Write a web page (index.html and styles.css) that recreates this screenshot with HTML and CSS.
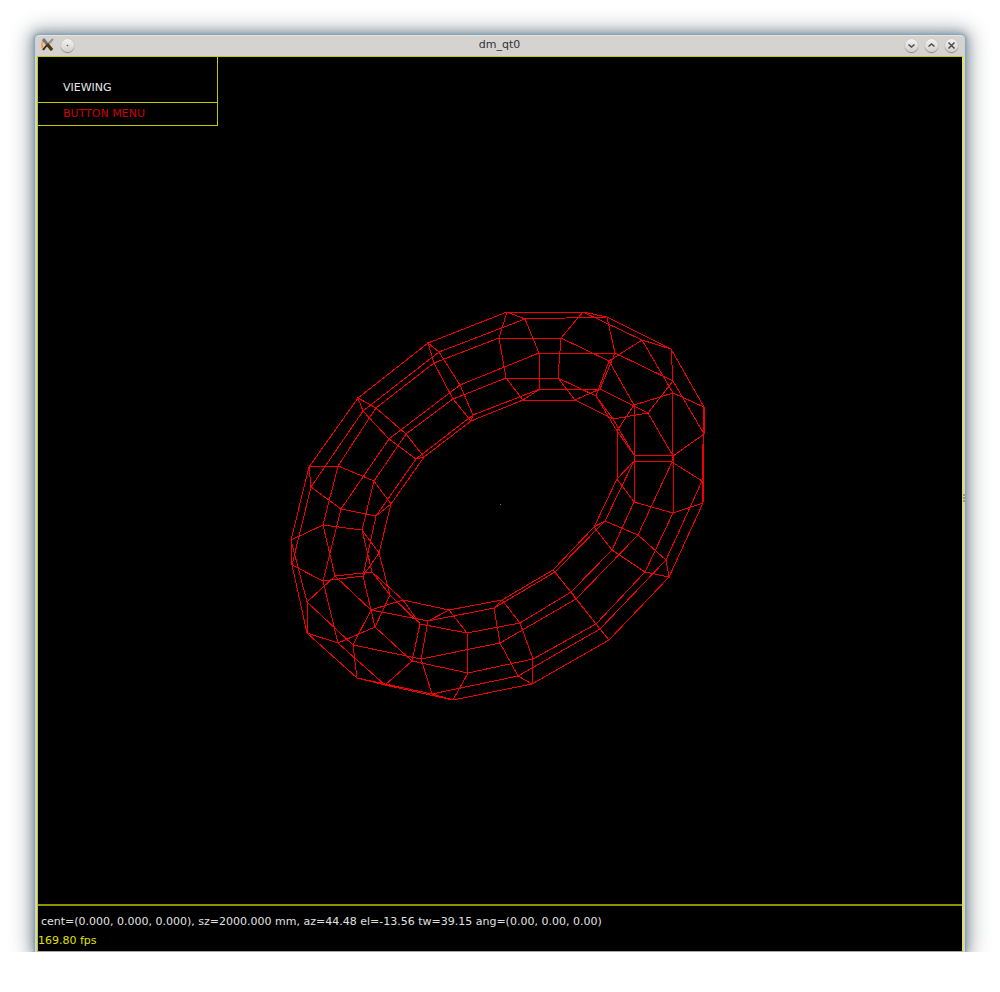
FILE: index.html
```html
<!DOCTYPE html>
<html lang="en">
<head>
<meta charset="utf-8">
<title>dm_qt0</title>
<link rel="stylesheet" href="styles.css">
</head>
<body>
<div class="desktop">
  <main class="window">
    <header class="titlebar">
      <div class="title-group">
        <svg class="app-icon" viewBox="0 0 13 14" aria-hidden="true">
          <path d="M3 2Q-1 7 3 12" fill="none" stroke="#f0a050" stroke-width="2"/>
          <path d="M9 2Q12 4 10 6" fill="none" stroke="#eeb070" stroke-width="1"/>
          <path d="M2 1L11 12" stroke="#77746f" stroke-width="3"/>
          <path d="M12 1L7 6" stroke="#929292" stroke-width="2"/>
          <path d="M6 7L2 12" stroke="#332b1c" stroke-width="2"/>
          <path d="M6 6L11 12" stroke="#4b3a10" stroke-width="3"/>
        </svg>
        <button class="round" type="button" aria-label="Pin window"><svg viewBox="0 0 13 13"><circle cx="6.500" cy="6.500" r=".8" fill="#555"/></svg></button>
      </div>
      <h1 class="title">dm_qt0</h1>
      <div class="title-group title-controls">
        <button class="round" type="button" aria-label="Minimize"><svg viewBox="0 0 13 13"><path d="M3.500 5.500L6.500 8L9.500 5.500"/></svg></button>
        <button class="round" type="button" aria-label="Maximize"><svg viewBox="0 0 13 13"><path d="M3.500 7.500L6.500 5L9.500 7.500"/></svg></button>
        <button class="round" type="button" aria-label="Close"><svg viewBox="0 0 13 13"><path d="M3.500 3.500L9.500 9.500M9.500 3.500L3.500 9.500"/></svg></button>
      </div>
    </header>
    <section class="client">
      <div class="view">
        <svg class="model" viewBox="38 57 924 847" role="img" aria-label="Wireframe torus">
          <g class="rings">
            <polygon points="428,343 439,352 460,385 473,415 471,421 453,399 434,363"/>
            <polygon points="507,312 525,319 539,353 540,389 523,400 506,378 499,338"/>
            <polygon points="583,312 607,317 615,353 600,389 575,400 558,378 561,338"/>
            <polygon points="642,340 671,349 673,381 648,413 613,419 596,396 609,361"/>
            <polygon points="673,393 704,407 704,434 673,456 634,455 617,431 634,405"/>
            <polygon points="672,462 702,481 703,503 673,513 634,502 617,479 634,461"/>
            <polygon points="638,535 666,560 669,577 645,572 612,550 594,527 605,521"/>
            <polygon points="576,599 600,629 609,640 596,624 571,592 553,570 555,572"/>
            <polygon points="500,643 518,676 532,684 533,659 520,623 502,600 494,608"/>
            <polygon points="421,659 432,694 453,700 468,673 467,633 449,610 428,621"/>
            <polygon points="353,645 357,678 385,685 412,661 420,624 403,600 371,610"/>
            <polygon points="307,602 307,633 338,643 375,627 390,595 372,572 335,576"/>
            <polygon points="291,540 292,565 323,581 363,576 379,553 362,530 323,525"/>
            <polygon points="309,467 311,487 341,509 376,516 391,504 374,481 338,466"/>
            <polygon points="358,398 363,411 389,439 416,459 424,457 406,434 376,408"/>
          </g>
          <g class="bands">
            <polygon points="428,343 507,312 583,312 642,340 673,393 672,462 638,535 576,599 500,643 421,659 353,645 307,602 291,540 309,467 358,398"/>
            <polygon points="439,352 525,319 607,317 671,349 704,407 702,481 666,560 600,629 518,676 432,694 357,678 307,633 292,565 311,487 363,411"/>
            <polygon points="460,385 539,353 615,353 673,381 704,434 703,503 669,577 609,640 532,684 453,700 385,685 338,643 323,581 341,509 389,439"/>
            <polygon points="473,415 540,389 600,389 648,413 673,456 673,513 645,572 596,624 533,659 468,673 412,661 375,627 363,576 376,516 416,459"/>
            <polygon points="471,421 523,400 575,400 613,419 634,455 634,502 612,550 571,592 520,623 467,633 420,624 390,595 379,553 391,504 424,457"/>
            <polygon points="453,399 506,378 558,378 596,396 617,431 617,479 594,527 553,570 502,600 449,610 403,600 372,572 362,530 374,481 406,434"/>
            <polygon points="434,363 499,338 561,338 609,361 634,405 634,461 605,521 555,572 494,608 428,621 371,610 335,576 323,525 338,466 376,408"/>
          </g>
          <rect class="center-dot" x="500" y="504" width="1" height="1"/>
        </svg>
        <nav class="menu" aria-label="Viewing">
          <button class="menu-item viewing" type="button">VIEWING</button>
          <button class="menu-item button-menu" type="button">BUTTON MENU</button>
        </nav>
      </div>
      <footer class="status">
        <p class="coords">cent=(0.000, 0.000, 0.000), sz=2000.000 mm, az=44.48 el=-13.56 tw=39.15 ang=(0.00, 0.00, 0.00)</p>
        <p class="fps">169.80 fps</p>
      </footer>
    </section>
  </main>
</div>
</body>
</html>
```
FILE: styles.css
```css
* { box-sizing: border-box; }

body {
  margin: 0;
  min-height: 100vh;
  padding-bottom: 40px;
  display: flex;
  flex-direction: column;
  background: #fff;
  font-family: "DejaVu Sans", sans-serif;
}

.desktop {
  flex: 1;
  display: flex;
  padding: 35px 35px 0;
  overflow: hidden;
}

.window {
  position: relative;
  flex: 1;
  min-width: 0;
  display: flex;
  flex-direction: column;
  padding: 0 2px;
  background: #d6d2d0;
  border-radius: 4px 4px 0 0;
  box-shadow: 0 0 2px 1px #7fa6c0, 0 0 8px 2px rgba(75, 105, 130, .5), 0 0 20px 6px rgba(50, 60, 70, .4);
}

/* resize grip on the right frame */
.window::after {
  content: "";
  position: absolute;
  right: 0;
  top: 50%;
  width: 2px;
  height: 8px;
  background: repeating-linear-gradient(#999 0 2px, #d6d2d0 2px 3px);
}

.titlebar {
  height: 21px;
  display: grid;
  grid-template-columns: 1fr auto 1fr;
  align-items: center;
  padding: 0 5px 2px 4px;
  border-top: 1px solid #e6e4e2;
  border-radius: 4px 4px 0 0;
}

.title {
  margin: 0;
  font-size: 11px;
  font-weight: 400;
  line-height: 18px;
  color: #333;
}

.title-group {
  display: flex;
  align-items: center;
  gap: 7px;
}

.title-controls { justify-content: flex-end; }

.app-icon {
  width: 13px;
  height: 14px;
}

.round {
  width: 13px;
  height: 13px;
  padding: 0;
  border: 0;
  border-radius: 50%;
  background: linear-gradient(#f4f3f2, #d2cfcd);
  box-shadow: 0 0 1px #aaa6a4, 0 1px 1px #858180;
}

.round svg {
  display: block;
  fill: none;
  stroke: #4c4c4c;
  stroke-width: 1.5;
}

.round circle { stroke: none; }

.client {
  flex: 1;
  display: flex;
  flex-direction: column;
  background: #000;
  border: 1px solid #c8c800;
  border-right: 1px solid #e8e800;
  border-bottom-color: #aaa;
}

.view {
  flex: 1;
  min-height: 0;
  display: grid;
  grid-template-rows: minmax(0, 1fr);
}

.model {
  grid-area: 1 / 1;
  width: 100%;
  height: 100%;
  min-height: 0;
}

.model polygon {
  fill: none;
  stroke: #f00000;
  stroke-width: 1;
  shape-rendering: crispEdges;
}

.center-dot { fill: #8c8c00; }

.menu {
  grid-area: 1 / 1;
  place-self: start;
  width: 180px;
  border-right: 1px solid #c8c800;
  position: relative;
}

.menu-item {
  display: block;
  width: 100%;
  padding: 0 0 0 25px;
  border: 0;
  border-bottom: 1px solid #c8c800;
  background: none;
  font-family: inherit;
  font-size: 11px;
  line-height: 16px;
  text-align: left;
}

.viewing {
  padding-top: 23px;
  padding-bottom: 6px;
  color: #e6e6e6;
}

.button-menu {
  padding-top: 3px;
  padding-bottom: 3px;
  color: #d00000;
}

.status {
  height: 47px;
  padding-top: 6px;
  border-top: 2px solid #909000;
  font-size: 11px;
  line-height: 19px;
}

.status p { margin: 0; }

.coords {
  padding-left: 3px;
  color: #e0e0e0;
}

.fps { color: #e0e000; }
```
